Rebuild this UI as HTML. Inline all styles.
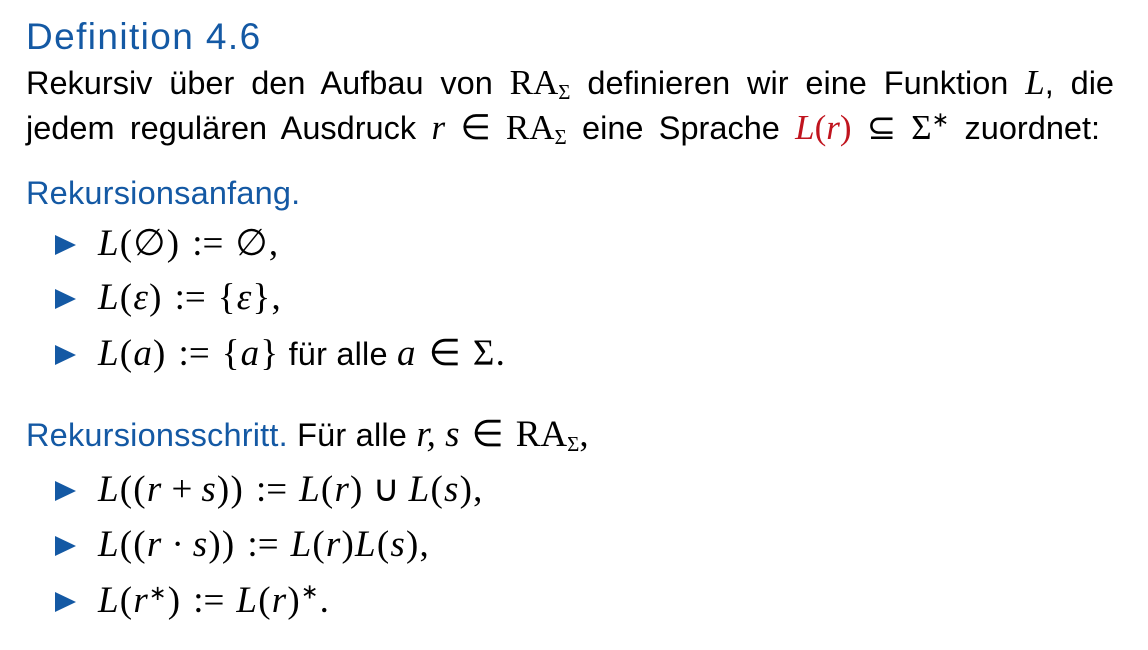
<!DOCTYPE html>
<html><head><meta charset="utf-8"><style>
body{margin:0;width:1148px;height:650px;background:#fff;position:relative;overflow:hidden;font-family:"Liberation Sans",sans-serif;color:#000}
.l{position:absolute;left:26px;font-size:32.5px;line-height:32px;white-space:nowrap;letter-spacing:0.2px}
.j{width:1088px;text-align:justify;text-align-last:justify;white-space:normal;letter-spacing:0}
.b{color:#1459a4}
.m{font-family:"Liberation Serif",serif;font-style:italic;font-size:37px;letter-spacing:0}
.r{font-family:"Liberation Serif",serif;font-size:37px;letter-spacing:0}
.o{font-family:"Liberation Serif",serif;font-size:37px;margin:0 12px;letter-spacing:0}
.s{font-family:"Liberation Serif",serif;font-size:37px;margin:0 9px;letter-spacing:0}
.it .m,.it .r{letter-spacing:1.2px}
.j .m,.j .r{font-size:35px}
.red{color:#c0141e}
.tri{position:absolute;left:55px;width:0;height:0;border-left:21px solid #1459a4;border-top:10px solid transparent;border-bottom:10px solid transparent}
.it{left:98px}
sub{font-size:21px;vertical-align:-5px;line-height:0}
sup{font-size:21px;line-height:0}
</style></head><body>
<div class="l b" style="top:19px;font-size:37px;line-height:36px;letter-spacing:1.4px">Definition 4.6</div>
<div class="l j" style="top:67px">Rekursiv über den Aufbau von <span class="r">RA<sub>Σ</sub></span> definieren wir eine Funktion <span class="m">L</span>, die</div>
<div class="l j" style="top:112px;width:1074px">jedem regulären Ausdruck <span class="m">r</span> <span class="r">∈ RA<sub>Σ</sub></span> eine Sprache <span class="m red">L</span><span class="r red">(</span><span class="m red">r</span><span class="r red">)</span> <span class="r">⊆ Σ<sup>∗</sup></span> zuordnet:</div>
<div class="l b" style="top:177px">Rekursionsanfang.</div>
<div class="tri" style="top:235px"></div>
<div class="l it" style="top:228px"><span class="m">L</span><span class="r">(∅)</span><span class="o">:=</span><span class="r">∅,</span></div>
<div class="tri" style="top:289px"></div>
<div class="l it" style="top:282px"><span class="m">L</span><span class="r">(</span><span class="m">ε</span><span class="r">)</span><span class="o">:=</span><span class="r">{</span><span class="m">ε</span><span class="r">},</span></div>
<div class="tri" style="top:345px"></div>
<div class="l it" style="top:338px"><span class="m">L</span><span class="r">(</span><span class="m">a</span><span class="r">)</span><span class="o">:=</span><span class="r">{</span><span class="m">a</span><span class="r">}</span> für alle <span class="m">a</span><span class="o">∈</span><span class="r">Σ.</span></div>
<div class="l" style="top:419px"><span class="b">Rekursionsschritt.</span> Für alle <span class="m">r, s</span><span class="o">∈</span><span class="r">RA<sub>Σ</sub>,</span></div>
<div class="tri" style="top:481px"></div>
<div class="l it" style="top:474px"><span class="m">L</span><span class="r">((</span><span class="m">r</span><span class="s">+</span><span class="m">s</span><span class="r">))</span><span class="o">:=</span><span class="m">L</span><span class="r">(</span><span class="m">r</span><span class="r">)</span><span class="s">∪</span><span class="m">L</span><span class="r">(</span><span class="m">s</span><span class="r">),</span></div>
<div class="tri" style="top:536px"></div>
<div class="l it" style="top:529px"><span class="m">L</span><span class="r">((</span><span class="m">r</span><span class="s">·</span><span class="m">s</span><span class="r">))</span><span class="o">:=</span><span class="m">L</span><span class="r">(</span><span class="m">r</span><span class="r">)</span><span class="m">L</span><span class="r">(</span><span class="m">s</span><span class="r">),</span></div>
<div class="tri" style="top:592px"></div>
<div class="l it" style="top:585px"><span class="m">L</span><span class="r">(</span><span class="m">r</span><sup class="r" style="font-size:21px">∗</sup><span class="r">)</span><span class="o">:=</span><span class="m">L</span><span class="r">(</span><span class="m">r</span><span class="r">)<sup>∗</sup>.</span></div>
</body></html>
